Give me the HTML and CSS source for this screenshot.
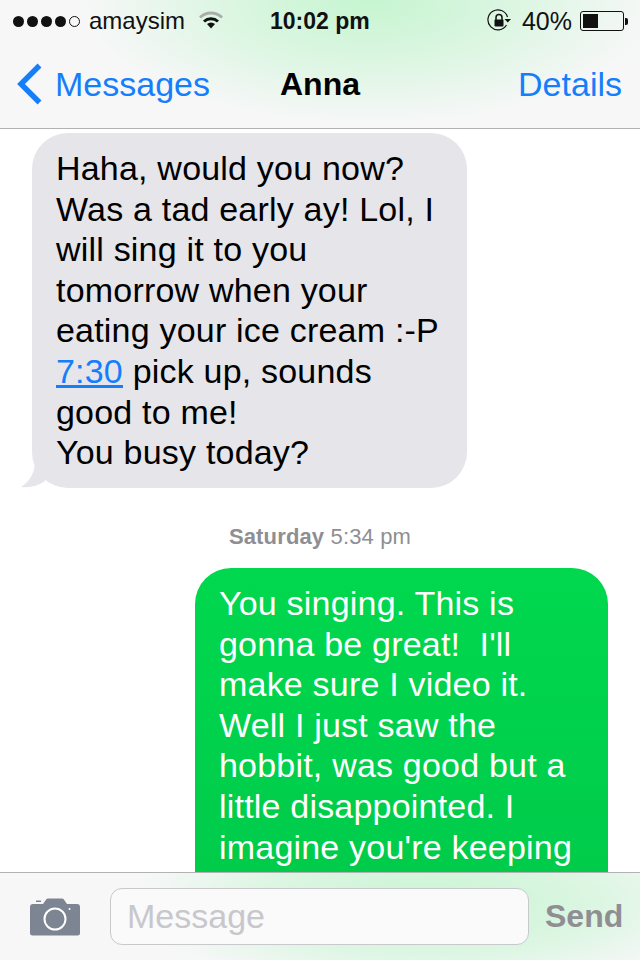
FILE: index.html
```html
<!DOCTYPE html>
<html lang="en">
<head>
  <meta charset="UTF-8" />
  <meta name="viewport" content="width=device-width, initial-scale=1.0" />
  <title>Anna</title>
  <link rel="stylesheet" href="styles.css">
</head>
<body>
  <div class="phone">
    <header class="top">
      <div class="status">
        <div class="status-left">
          <span class="signal"><i></i><i></i><i></i><i></i><i class="off"></i></span>
          <span class="carrier">amaysim</span>
          <svg class="wifi" width="24" height="18" viewBox="0 0 24 18">
            <path d="M1 6.500 A16 16 0 0 1 23 6.500" fill="none" stroke="#a9aea9" stroke-width="3"/>
            <path d="M5 10.500 A10.500 10.500 0 0 1 19 10.500" fill="none" stroke="#111" stroke-width="3"/>
            <path d="M8 13 A6 6 0 0 1 16 13 L12 17.500 Z" fill="#111"/>
          </svg>
        </div>
        <div class="clock">10:02 pm</div>
        <div class="status-right">
          <svg class="lock" width="24" height="24" viewBox="0 0 24 24">
            <path d="M19.500 16 A10 10 0 1 1 20.500 8" fill="none" stroke="#111" stroke-width="1.200"/>
            <path d="M17.500 10 H24 L20.800 13.500 Z" fill="#111"/>
            <path d="M9 11 V8.500 A3 3 0 0 1 15 8.500 V11" fill="none" stroke="#111" stroke-width="1.500"/>
            <rect x="7.500" y="10.500" width="9" height="7" rx="1" fill="#111"/>
          </svg>
          <span class="percent">40%</span>
          <span class="battery"><span class="charge"></span></span>
          <span class="battery-tip"></span>
        </div>
      </div>
      <nav class="nav">
        <a class="back">
          <svg width="28" height="44" viewBox="0 0 28 44">
            <path d="M24.500 3.500 L6 22 L24.500 40.500" fill="none" stroke="#157efb" stroke-width="5.500"/>
          </svg>
          <span>Messages</span>
        </a>
        <div class="title">Anna</div>
        <a class="details">Details</a>
      </nav>
    </header>

    <main class="thread">
      <div class="bubble them">
        Haha, would you now?<br>
        Was a tad early ay! Lol, I<br>
        will sing it to you<br>
        tomorrow when your<br>
        eating your ice cream :-P<br>
        <a class="link">7:30</a> pick up, sounds<br>
        good to me!<br>
        You busy today?
        <svg class="tail" width="26" height="24" viewBox="0 0 26 24">
          <path d="M14 0 C13 10 8 18 0 23 C9 24 17 22 24 17 L26 0 Z" fill="#e5e5ea"/>
        </svg>
      </div>
      <div class="stamp"><b>Saturday</b> 5:34 pm</div>
      <div class="bubble me">
        You singing. This is<br>
        gonna be great!&nbsp; I'll<br>
        make sure I video it.<br>
        Well I just saw the<br>
        hobbit, was good but a<br>
        little disappointed. I<br>
        imagine you're keeping
      </div>
    </main>

    <footer class="compose">
      <svg class="camera" width="50" height="38" viewBox="0 0 50 38">
        <path d="M3 6 H13 L16.500 1 Q17 0.500 18 0.500 H32 Q33 0.500 33.500 1 L37 6 H47 Q50 6 50 9 V35 Q50 37.500 47.500 37.500 H2.500 Q0 37.500 0 35 V9 Q0 6 3 6 Z" fill="#7d8592"/>
        <rect x="6" y="2.500" width="5" height="1.500" fill="#7d8592"/>
        <circle cx="25" cy="21" r="10.500" fill="none" stroke="#fff" stroke-width="2"/>
        <circle cx="39.500" cy="11" r="1" fill="#fff"/>
      </svg>
      <div class="input">Message</div>
      <div class="send">Send</div>
    </footer>
  </div>
</body>
</html>
```

FILE: styles.css
```css
* {
  box-sizing: border-box;
}

body {
  margin: 0;
  font-family: "Liberation Sans", Arial, sans-serif;
  background: #fff;
}

.phone {
  width: 640px;
  height: 960px;
  display: flex;
  flex-direction: column;
  overflow: hidden;
}

/* top bars */
.top {
  height: 129px;
  flex: none;
  border-bottom: 1px solid #b2b2b2;
  background:
    radial-gradient(ellipse 290px 125px at 370px 0px, #c6f5d0 0%, rgba(198,245,208,0.6) 45%, rgba(198,245,208,0) 100%),
    #f7f7f8;
}

.status {
  height: 40px;
  display: flex;
  align-items: center;
  justify-content: space-between;
  padding: 2px 12px 0 13px;
  position: relative;
  font-size: 24px;
  color: #111;
}

.status-left, .status-right {
  display: flex;
  align-items: center;
}

.signal {
  display: flex;
  gap: 3px;
  margin-right: 9px;
}

.signal i {
  width: 11px;
  height: 11px;
  border-radius: 50%;
  background: #111;
}

.signal i.off {
  background: none;
  border: 1px solid #111;
}

.wifi {
  margin-left: 14px;
  margin-top: -3px;
}

.clock {
  position: absolute;
  left: 270px;
  font-weight: bold;
  font-size: 23px;
}

.lock {
  margin-right: 11px;
}

.percent {
  margin-right: 8px;
  font-size: 25px;
}

.battery {
  width: 44px;
  height: 20px;
  border: 1px solid #111;
  border-radius: 3px;
  padding: 2px;
  display: block;
}

.charge {
  display: block;
  width: 15px;
  height: 14px;
  background: #111;
}

.battery-tip {
  width: 3px;
  height: 7px;
  margin-left: 1px;
  background: #111;
  border-radius: 0 2px 2px 0;
}

.nav {
  height: 88px;
  display: flex;
  align-items: center;
  justify-content: space-between;
  position: relative;
  padding: 0 18px 0 15px;
  font-size: 34px;
  color: #157efb;
}

.back {
  display: flex;
  align-items: center;
  gap: 12px;
}

.title {
  position: absolute;
  left: 280px;
  font-size: 32px;
  font-weight: bold;
  color: #000;
}

/* messages */
.thread {
  flex: 1;
  min-height: 0;
  overflow: hidden;
  padding-top: 4px;
}

.bubble {
  position: relative;
  font-size: 34px;
  letter-spacing: 0.2px;
  line-height: 40.6px;
  border-radius: 36px;
}

.them {
  width: 435px;
  height: 355px;
  margin-left: 32px;
  padding: 15px 0 0 24px;
  background: #e5e5ea;
  color: #000;
}

.tail {
  position: absolute;
  left: -11px;
  bottom: 0;
}

.link {
  color: #157efb;
  text-decoration: underline;
}

.stamp {
  margin-top: 36px;
  height: 28px;
  line-height: 26px;
  text-align: center;
  font-size: 22px;
  letter-spacing: 0.15px;
  color: #8e8e93;
}

.me {
  width: 413px;
  margin: 16px 0 0 195px;
  padding: 15px 0 70px 24px;
  background: linear-gradient(#00d84e, #00c94a);
  color: #fff;
}

/* compose bar */
.compose {
  height: 88px;
  flex: none;
  display: flex;
  align-items: center;
  padding-left: 30px;
  border-top: 1px solid #b2b2b2;
  background:
    radial-gradient(ellipse 300px 90px at 430px 30px, #c9f5d3 0%, rgba(201,245,211,0.6) 55%, rgba(201,245,211,0) 100%),
    #f7f7f8;
}

.input {
  width: 419px;
  height: 57px;
  margin-left: 30px;
  padding-left: 16px;
  line-height: 55px;
  font-size: 34px;
  color: #c7c7cc;
  background: #fafafb;
  border: 1px solid #c8c8cd;
  border-radius: 12px;
}

.send {
  margin-left: 16px;
  font-size: 32px;
  font-weight: bold;
  color: #8e8e93;
}
```
